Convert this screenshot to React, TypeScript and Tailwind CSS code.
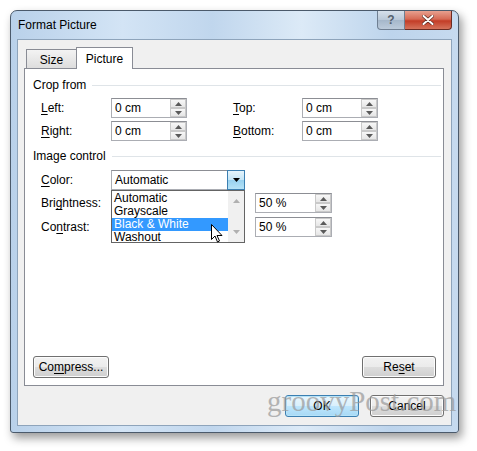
import React from "react";

function Up({ c = "#5a5a5a" }: { c?: string }) {
  return (
    <svg width="7" height="4" viewBox="0 0 7 4">
      <path d="M0 4 L3.5 0 L7 4 Z" fill={c} />
    </svg>
  );
}
function Down({ c = "#5a5a5a" }: { c?: string }) {
  return (
    <svg width="7" height="4" viewBox="0 0 7 4">
      <path d="M0 0 L7 0 L3.5 4 Z" fill={c} />
    </svg>
  );
}

function Spin({ value, w = "w-[76px]" }: { value: string; w?: string }) {
  return (
    <div className={`flex h-[20px] ${w} border border-[#abadb3] border-t-[#8c8e94] bg-white`}>
      <div className="flex-1 pl-[3px] text-[12px] leading-[18px] text-black">{value}</div>
      <div className="flex w-[16px] flex-col">
        <div className="flex h-[9px] items-center justify-center border border-[#c9c9c9] bg-[linear-gradient(#f7f7f7,#e6e6e6)]">
          <Up />
        </div>
        <div className="flex h-[9px] items-center justify-center border border-[#c9c9c9] bg-[linear-gradient(#f7f7f7,#e6e6e6)]">
          <Down />
        </div>
      </div>
    </div>
  );
}

function U({ children }: { children: React.ReactNode }) {
  return <span className="underline underline-offset-[2px]">{children}</span>;
}

function Header({ title }: { title: string }) {
  return (
    <div className="flex h-[16px] items-center pl-[8px] pr-[2px]">
      <span className="text-[12px] leading-[16px] text-black">{title}</span>
      <div className="ml-[6px] h-[1px] flex-1 bg-[#dfe4e8]" />
    </div>
  );
}

function Btn({ children, w, def = false }: { children: React.ReactNode; w: string; def?: boolean }) {
  return (
    <div
      className={`flex h-[22px] ${w} items-center justify-center rounded-[3px] border text-[12px] text-black ${
        def
          ? "border-[#3c7fb1] bg-[linear-gradient(#eaf6fd_0%,#d9f0fc_50%,#bee6fd_51%,#a7d9f5_100%)] shadow-[inset_0_0_0_1px_#b7e3f8]"
          : "border-[#707070] bg-[linear-gradient(#f2f2f2_0%,#ebebeb_50%,#dddddd_51%,#cfcfcf_100%)] shadow-[inset_0_0_0_1px_#fcfcfc]"
      }`}
    >
      {children}
    </div>
  );
}

export default function App() {
  return (
    <div className="relative h-[451px] w-[477px] overflow-hidden bg-white font-['Liberation_Sans',Arial,sans-serif]">
      <div className="ml-[10px] mt-[10px] flex h-[423px] w-[449px] flex-col rounded-t-[7px] rounded-b-[3px] border border-[#4b5a6b] bg-[linear-gradient(90deg,#b9d1ea_0%,#d3e4f5_25%,#c0d6ed_45%,#dceaf7_65%,#bdd4ec_85%,#c6daef_100%)] shadow-[3px_5px_10px_rgba(0,0,0,0.4)]">
        {/* title bar */}
        <div className="flex h-[28px] items-start">
          <div className="flex-1 pl-[7px] pt-[7px] text-[12px] leading-[14px] text-black">Format Picture</div>
          <div className="flex items-start pr-[6px]">
            <div className="flex h-[19px] w-[28px] items-center justify-center rounded-bl-[4px] border border-t-0 border-[#6f7f92] bg-[linear-gradient(#d6e0eb,#b9c8d8_50%,#a5b7ca_51%,#bccbdb)] text-[12px] font-bold leading-none text-[#55606d]">
              ?
            </div>
            <div className="flex h-[19px] w-[47px] items-center justify-center rounded-br-[4px] border border-l-0 border-t-0 border-[#6b2b22] bg-[linear-gradient(#e8a08f,#d66a55_45%,#c33d27_55%,#d5735c)]">
              <svg width="12" height="10" viewBox="0 0 12 10">
                <path d="M1.5 1 L10.5 9 M10.5 1 L1.5 9" stroke="#5b2a22" strokeWidth="3.4" strokeLinecap="round" />
                <path d="M1.5 1 L10.5 9 M10.5 1 L1.5 9" stroke="#ffffff" strokeWidth="2" strokeLinecap="round" />
              </svg>
            </div>
          </div>
        </div>
        {/* content */}
        <div className="mx-[6px] mb-[6px] flex flex-1 flex-col border border-[#8ea4bb] bg-[#f0f0f0] pl-[6px] pr-[7px]">
          {/* tabs */}
          <div className="mt-[7px] flex h-[21px] items-end pl-[2px]">
            <div className="mb-[-1px] flex h-[20px] w-[51px] items-center justify-center border border-b-0 border-[#898c95] bg-[linear-gradient(#f3f3f3,#dcdcdc)] text-[12px] text-black">
              Size
            </div>
            <div className="relative z-10 mb-[-1px] ml-[-1px] flex h-[22px] w-[57px] items-center justify-center border border-b-0 border-[#898c95] bg-white text-[12px] text-black">
              Picture
            </div>
          </div>
          {/* panel */}
          <div className="flex h-[318px] w-[420px] flex-col border border-[#898c95] bg-white">
            <div className="mt-[8px]">
              <Header title="Crop from" />
            </div>
            <div className="mt-[5px] flex items-center pl-[16px]">
              <div className="w-[70px] text-[12px] text-black">
                <U>L</U>eft:
              </div>
              <Spin value="0 cm" />
              <div className="w-[46px]" />
              <div className="w-[69px] text-[12px] text-black">
                <U>T</U>op:
              </div>
              <Spin value="0 cm" />
            </div>
            <div className="mt-[3px] flex items-center pl-[16px]">
              <div className="w-[70px] text-[12px] text-black">
                <U>R</U>ight:
              </div>
              <Spin value="0 cm" />
              <div className="w-[46px]" />
              <div className="w-[69px] text-[12px] text-black">
                <U>B</U>ottom:
              </div>
              <Spin value="0 cm" />
            </div>
            <div className="mt-[7px]">
              <Header title="Image control" />
            </div>
            <div className="relative z-20 mt-[6px] flex items-center pl-[16px]">
              <div className="w-[70px] text-[12px] text-black">
                <U>C</U>olor:
              </div>
              <div className="relative">
                <div className="flex h-[20px] w-[134px] border border-[#abadb3] border-t-[#8c8e94] bg-white">
                  <div className="flex-1 pl-[3px] text-[12px] leading-[18px] text-black">Automatic</div>
                  <div className="mr-[-1px] mt-[-1px] flex h-[20px] w-[18px] items-center justify-center border border-[#3c7fb1] bg-[linear-gradient(#e5f4fc,#c4e5f6_50%,#98d1ef_51%,#b6e3f7)]">
                    <Down c="#000" />
                  </div>
                </div>
                <div className="absolute left-0 top-[20px] flex h-[53px] w-[134px] border border-[#646464] bg-white">
                  <div className="flex flex-1 flex-col pt-[1px] text-[12px] leading-[13px] text-black">
                    <div className="h-[13px] pl-[2px]">Automatic</div>
                    <div className="h-[13px] pl-[2px]">Grayscale</div>
                    <div className="h-[13px] bg-[#3399ff] pl-[2px] text-white">Black &amp; White</div>
                    <div className="h-[13px] pl-[2px]">Washout</div>
                  </div>
                  <div className="flex w-[16px] flex-col items-center justify-between bg-[#f0f0f0] py-[8px]">
                    <Up c="#b0b0b0" />
                    <Down c="#b0b0b0" />
                  </div>
                  {/* cursor */}
                  <svg className="absolute left-[99px] top-[33px]" width="12" height="19" viewBox="0 0 12 19">
                    <path d="M0.5 0.5 L0.5 15.5 L4 12 L6.5 18 L8.5 17 L6 11.5 L11 11.5 Z" fill="#fff" stroke="#000" strokeWidth="1" strokeLinejoin="round" />
                  </svg>
                </div>
              </div>
            </div>
            <div className="mt-[3px] flex items-center pl-[16px]">
              <div className="w-[70px] text-[12px] text-black">
                Bri<U>g</U>htness:
              </div>
              <div className="w-[144px]" />
              <Spin value="50 %" w="w-[77px]" />
            </div>
            <div className="mt-[4px] flex items-center pl-[16px]">
              <div className="w-[70px] text-[12px] text-black">
                Co<U>n</U>trast:
              </div>
              <div className="w-[144px]" />
              <Spin value="50 %" w="w-[77px]" />
            </div>
            <div className="flex-1" />
            <div className="mb-[7px] flex justify-between pl-[8px] pr-[7px]">
              <Btn w="w-[76px]">
                Co<U>m</U>press...
              </Btn>
              <Btn w="w-[74px]">
                Re<U>s</U>et
              </Btn>
            </div>
          </div>
          {/* bottom buttons */}
          <div className="mt-[9px] flex justify-end gap-[11px]">
            <Btn w="w-[74px]" def>
              OK
            </Btn>
            <Btn w="w-[74px]">Cancel</Btn>
          </div>
        </div>
      </div>
      {/* watermark */}
      <div className="pointer-events-none absolute left-[267px] top-[385px] font-['Liberation_Serif',serif] text-[29px] leading-[32px] text-[#999999] opacity-70">
        groovyPost.com
      </div>
    </div>
  );
}
